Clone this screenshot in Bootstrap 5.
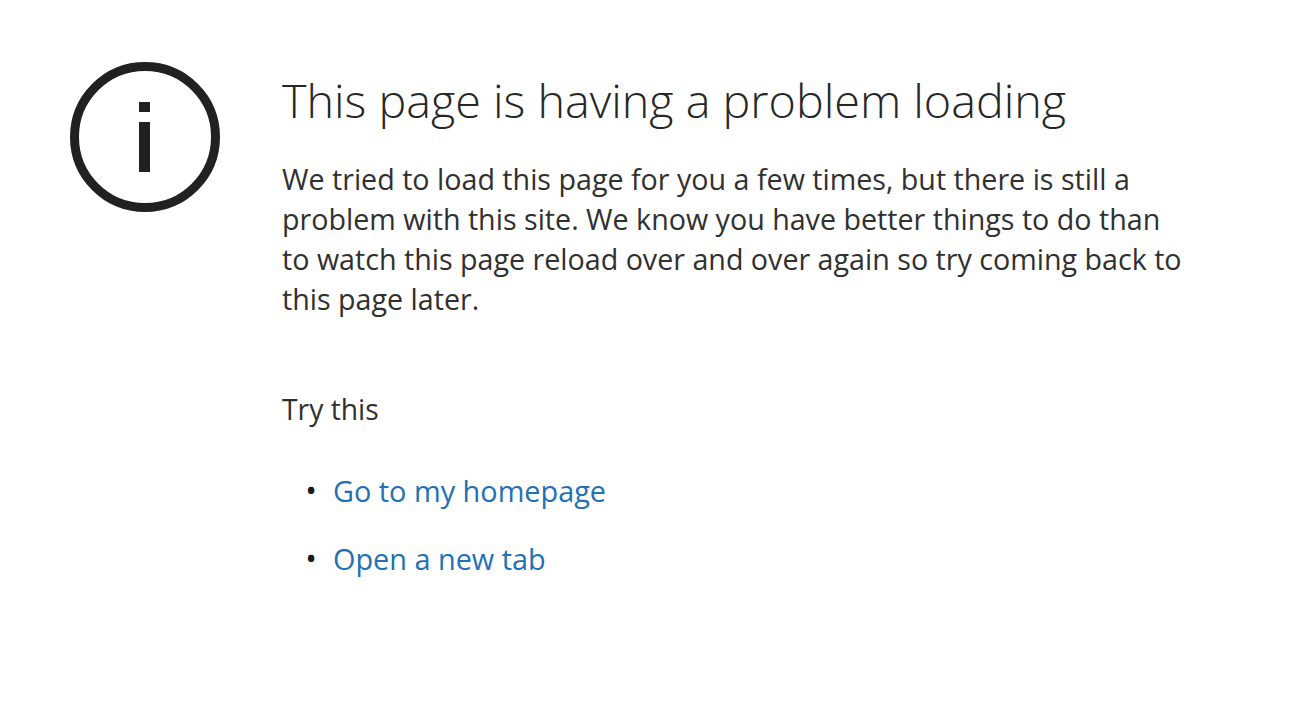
<!DOCTYPE html>
<html lang="en">
<head>
  <meta charset="UTF-8">
  <title>This page is having a problem loading</title>
  <link href="https://cdn.jsdelivr.net/npm/bootstrap@5.3.2/dist/css/bootstrap.min.css" rel="stylesheet">
  <style>
    body {
      background: #fff;
      color: #303030;
      font-family: "Open Sans", "Noto Sans", sans-serif;
      overflow: hidden;
    }
    .err-page {
      padding: 62px 0 0 70px;
      gap: 62px;
    }
    .err-icon {
      width: 150px;
      height: 150px;
      flex: none;
    }
    .err-body {
      width: 910px;
      padding-top: 11px;
    }
    .err-title {
      font-size: 46.7px;
      font-weight: 300;
      line-height: 54px;
      margin-bottom: 32px;
      color: #262626;
    }
    .err-text {
      font-size: 28.65px;
      line-height: 40px;
      margin-bottom: 70px;
    }
    .err-try {
      font-size: 28.3px;
      line-height: 40px;
      margin-bottom: 41px;
    }
    .err-list {
      font-size: 28.85px;
      padding-left: 51px;
      margin: 0;
    }
    .err-list li {
      line-height: 40px;
      margin-bottom: 27px;
    }
    .err-list li::marker {
      content: "\2022\00a0\00a0";
      font-size: 31px;
      color: #1a1a1a;
    }
    .err-list a {
      color: #2270b5;
      text-decoration: none;
    }
  </style>
</head>
<body>

<div class="d-flex err-page">
  <svg class="err-icon" viewBox="0 0 150 150">
    <circle cx="75" cy="75" r="70.5" fill="none" stroke="#212121" stroke-width="9"/>
    <rect x="69" y="40" width="11" height="10" fill="#212121"/>
    <rect x="69" y="60" width="11" height="50" fill="#212121"/>
  </svg>
  <div class="err-body">
    <h1 class="err-title">This page is having a problem loading</h1>
    <p class="err-text">We tried to load this page for you a few times, but there is still a problem with this site. We know you have better things to do than to watch this page reload over and over again so try coming back to this page later.</p>
    <p class="err-try">Try this</p>
    <ul class="err-list">
      <li><a href="#">Go to my homepage</a></li>
      <li><a href="#">Open a new tab</a></li>
    </ul>
  </div>
</div>

<script src="https://cdn.jsdelivr.net/npm/bootstrap@5.3.2/dist/js/bootstrap.bundle.min.js"></script>
</body>
</html>
